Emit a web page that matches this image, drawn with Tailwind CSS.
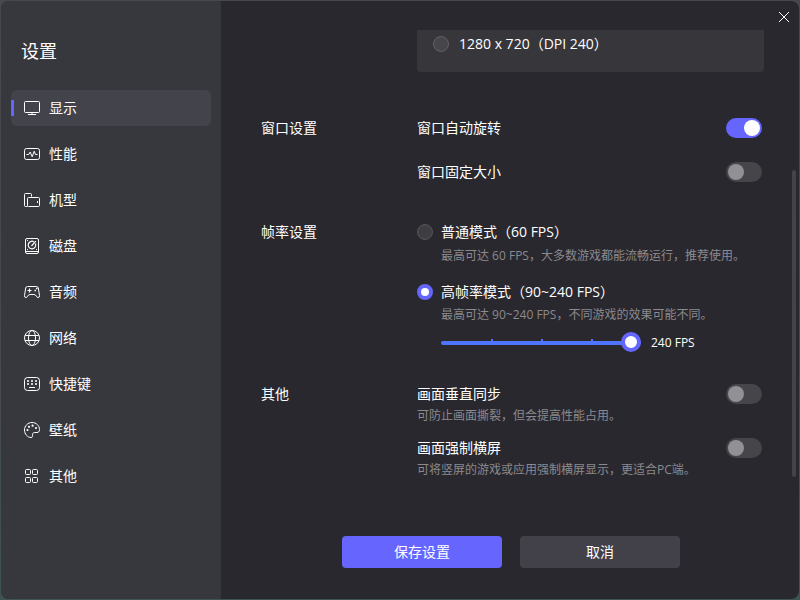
<!DOCTYPE html>
<html lang="zh-CN">
<head>
    <meta charset="UTF-8">
    <meta name="viewport" content="width=device-width, initial-scale=1.0">
    <script src="https://cdn.jsdelivr.net/npm/@tailwindcss/browser@4"></script>
    <title>设置</title>
</head>
<body class="h-screen min-h-[600px] flex p-px bg-linear-to-b from-[#47484c] via-[#4a464e] to-[#3c5452] font-['Open_Sans','Noto_Sans_CJK_SC',sans-serif] text-sm/5 text-white">
    <div class="relative flex flex-1 overflow-hidden rounded-lg bg-[#29282e]">

        <!-- Sidebar -->
        <aside class="w-[220px] shrink-0 bg-[#37383d] px-2.5 pt-9">
            <h1 class="px-2.5 text-lg/7">设置</h1>
            <nav class="mt-[25px] flex flex-col gap-2.5">
                <a href="#display" aria-current="page" class="relative flex h-9 items-center gap-[9px] rounded-md bg-[#43434b] px-[13px]">
                    <span class="absolute left-0 top-2.5 h-4 w-[3px] bg-[#6666ff]"></span>
                    <svg class="size-4" viewBox="0 0 16 16" fill="none" stroke="currentColor"><rect x=".5" y="1.5" width="15" height="11" rx="1"/><path d="M8 12.5v2M4 14.5h8"/></svg>
                    显示
                </a>
                <a href="#performance" class="flex h-9 items-center gap-[9px] px-[13px]">
                    <svg class="size-4" viewBox="0 0 16 16" fill="none" stroke="currentColor"><rect x=".5" y="2.5" width="15" height="11" rx="2"/><path d="M2.5 8.5h2.2L6.2 6l2 4.8 2-5.6 1.3 3.3h2" stroke-linejoin="round"/></svg>
                    性能
                </a>
                <a href="#model" class="flex h-9 items-center gap-[9px] px-[13px]">
                    <svg class="size-4" viewBox="0 0 16 16" fill="none" stroke="currentColor"><path d="M3.5 14.5h-2a1 1 0 0 1-1-1v-11a1 1 0 0 1 1-1h5a1 1 0 0 1 1 1v2"/><rect x="3.5" y="5.5" width="12" height="9" rx="1"/><path d="M13.5 9v2"/></svg>
                    机型
                </a>
                <a href="#disk" class="flex h-9 items-center gap-[9px] px-[13px]">
                    <svg class="size-4" viewBox="0 0 16 16" fill="none" stroke="currentColor"><rect x="1.5" y=".5" width="13" height="15" rx="1.5"/><path d="M2 13.5h12"/><path d="M9.8 3.7a3.8 3.8 0 1 0 1.7 1.9M7.5 8l4.3-4.8" stroke-width="1.2"/><path d="M3 2.5h1M3 11.5h1M12 11.5h1"/></svg>
                    磁盘
                </a>
                <a href="#audio" class="flex h-9 items-center gap-[9px] px-[13px]">
                    <svg class="size-4" viewBox="0 0 16 16" fill="none" stroke="currentColor" stroke-linejoin="round"><path d="M3.5 2.5h9q1.5 0 1.8 1.5l1.2 7.5q.2 2-1.5 2-1 0-1.5-1-.8-2-2.500-2H6q-1.700 0-2.500 2-.5 1-1.500 1-1.700 0-1.500-2L1.700 4Q2 2.500 3.500 2.500Z"/><path d="M5.500 4.500v4M3.500 6.500h4" stroke-width="1.200"/><path d="M10.500 6.500h1.500M12 4.500h1.500" stroke-width="1.600"/></svg>
                    音频
                </a>
                <a href="#network" class="flex h-9 items-center gap-[9px] px-[13px]">
                    <svg class="size-4" viewBox="0 0 16 16" fill="none" stroke="currentColor"><circle cx="8" cy="8" r="7.5"/><ellipse cx="8" cy="8" rx="3.5" ry="7.5"/><path d="M1.2 5.5h13.6M1.2 10.5h13.6"/></svg>
                    网络
                </a>
                <a href="#hotkeys" class="flex h-9 items-center gap-[9px] px-[13px]">
                    <svg class="size-4" viewBox="0 0 16 16" fill="none" stroke="currentColor"><rect x=".5" y="1.5" width="15" height="13" rx="3"/><path d="M3 5h2M7 5h2M11 5h2M3 8h2M7 8h2M11 8h2" stroke-width="1.6"/><path d="M5 11.500h6"/></svg>
                    快捷键
                </a>
                <a href="#wallpaper" class="flex h-9 items-center gap-[9px] px-[13px]">
                    <svg class="size-4" viewBox="0 0 16 16" fill="none" stroke="currentColor"><path d="M8 .5C3.8.5.5 3.8.5 8c0 4 3 7.5 6.5 7.5 2 0 1.5-1.8 1.5-2.700 0-1.500.8-2.300 2.200-2.300h2.300c1.500 0 2.500-1 2.500-2.800C15.500 3.500 12.200.5 8 .5Z"/><g fill="currentColor" stroke="none"><circle cx="3.5" cy="8" r="1.100"/><circle cx="5" cy="4.800" r="1.100"/><circle cx="8.600" cy="3.700" r="1.100"/><circle cx="12" cy="6" r="1.100"/></g></svg>
                    壁纸
                </a>
                <a href="#other" class="flex h-9 items-center gap-[9px] px-[13px]">
                    <svg class="size-4" viewBox="0 0 16 16" fill="none" stroke="currentColor"><rect x="1.5" y="1.5" width="5" height="5" rx="1"/><rect x="8.5" y="1.5" width="5" height="5" rx="1"/><rect x="1.5" y="9.5" width="5" height="5" rx="1"/><rect x="8.5" y="9.5" width="5" height="5" rx="1"/></svg>
                    其他
                </a>
            </nav>
        </aside>

        <!-- Content -->
        <main class="flex flex-1 flex-col">
            <div class="flex-1 overflow-hidden pl-10 pr-[35px] pt-[29px]">
                <div class="ml-[156px] h-[42px] rounded-b bg-[#37363b] px-4 pt-1">
                    <label class="flex items-center gap-2.5">
                        <input type="radio" name="resolution" class="size-4 appearance-none rounded-full border border-[#626165] bg-[#47464a]">
                        1280 x 720（DPI 240）
                    </label>
                </div>

                <section class="mt-[46px] flex">
                    <h2 class="w-[156px] shrink-0">窗口设置</h2>
                    <div class="flex flex-1 flex-col gap-6 pr-0.5">
                        <div class="flex justify-between">
                            <label for="autoRotate">窗口自动旋转</label>
                            <input id="autoRotate" type="checkbox" role="switch" checked class="h-5 w-9 appearance-none rounded-full bg-[#464549] p-0.5 before:block before:size-4 before:rounded-full before:bg-[#919095] checked:bg-[#6666ff] checked:before:ml-4 checked:before:bg-white">
                        </div>
                        <div class="flex justify-between">
                            <label for="fixedSize">窗口固定大小</label>
                            <input id="fixedSize" type="checkbox" role="switch" class="h-5 w-9 appearance-none rounded-full bg-[#464549] p-0.5 before:block before:size-4 before:rounded-full before:bg-[#919095] checked:bg-[#6666ff] checked:before:ml-4 checked:before:bg-white">
                        </div>
                    </div>
                </section>

                <section class="mt-10 flex">
                    <h2 class="w-[156px] shrink-0">帧率设置</h2>
                    <div class="flex flex-1 flex-col gap-4">
                        <div>
                            <label class="flex items-center gap-2">
                                <input type="radio" name="fps" class="size-4 appearance-none rounded-full border border-[#57565a] bg-[#3e3d42] checked:border-4 checked:border-[#6666ff] checked:bg-white">
                                普通模式（60 FPS）
                            </label>
                            <p class="ml-6 mt-1 text-xs/5 text-[#8b8a8e]">最高可达 60 FPS，大多数游戏都能流畅运行，推荐使用。</p>
                        </div>
                        <div>
                            <label class="flex items-center gap-2">
                                <input type="radio" name="fps" checked class="size-4 appearance-none rounded-full border border-[#57565a] bg-[#3e3d42] checked:border-4 checked:border-[#6666ff] checked:bg-white">
                                高帧率模式（90~240 FPS）
                            </label>
                            <p class="ml-6 mt-[3px] text-xs/5 text-[#8b8a8e]">最高可达 90~240 FPS，不同游戏的效果可能不同。</p>
                            <div class="ml-6 mt-2 flex items-center gap-2.5 text-xs/5">
                                <div class="relative flex">
                                    <input id="fpsRange" type="range" min="90" max="240" value="240" aria-label="FPS" class="h-5 w-[200px] appearance-none bg-transparent [&::-webkit-slider-runnable-track]:h-1 [&::-webkit-slider-runnable-track]:rounded-full [&::-webkit-slider-runnable-track]:bg-[#4f74ff] [&::-webkit-slider-thumb]:-mt-[9px] [&::-webkit-slider-thumb]:size-5 [&::-webkit-slider-thumb]:appearance-none [&::-webkit-slider-thumb]:rounded-full [&::-webkit-slider-thumb]:border-4 [&::-webkit-slider-thumb]:border-[#6666ff] [&::-webkit-slider-thumb]:bg-white">
                                    <div class="pointer-events-none absolute left-[50px] right-12 top-1.5 flex justify-between">
                                        <span class="h-1 w-0.5 bg-[#4f74ff]"></span>
                                        <span class="h-1 w-0.5 bg-[#4f74ff]"></span>
                                        <span class="h-1 w-0.5 bg-[#4f74ff]"></span>
                                    </div>
                                </div>
                                <output id="fpsValue" for="fpsRange">240 FPS</output>
                            </div>
                        </div>
                    </div>
                </section>

                <section class="mt-[31px] flex">
                    <h2 class="w-[156px] shrink-0">其他</h2>
                    <div class="flex flex-1 flex-col gap-3 pr-0.5">
                        <div class="flex items-start justify-between">
                            <div>
                                <label for="vsync">画面垂直同步</label>
                                <p class="mt-0.5 text-xs/5 text-[#8b8a8e]">可防止画面撕裂，但会提高性能占用。</p>
                            </div>
                            <input id="vsync" type="checkbox" role="switch" class="h-5 w-9 appearance-none rounded-full bg-[#464549] p-0.5 before:block before:size-4 before:rounded-full before:bg-[#919095] checked:bg-[#6666ff] checked:before:ml-4 checked:before:bg-white">
                        </div>
                        <div class="flex items-start justify-between">
                            <div>
                                <label for="landscape">画面强制横屏</label>
                                <p class="mt-0.5 text-xs/5 text-[#8b8a8e]">可将竖屏的游戏或应用强制横屏显示，更适合PC端。</p>
                            </div>
                            <input id="landscape" type="checkbox" role="switch" class="h-5 w-9 appearance-none rounded-full bg-[#464549] p-0.5 before:block before:size-4 before:rounded-full before:bg-[#919095] checked:bg-[#6666ff] checked:before:ml-4 checked:before:bg-white">
                        </div>
                    </div>
                </section>
            </div>

            <div class="flex justify-center gap-[18px] pb-[31px] pl-0.5">
                <button type="button" class="h-8 w-40 rounded-sm bg-[#6666ff]">保存设置</button>
                <button type="button" class="h-8 w-40 rounded-sm bg-[#42414a]">取消</button>
            </div>
        </main>

        <!-- Scrollbar -->
        <div class="absolute right-[3px] top-[169px] h-[307px] w-1 rounded-full bg-[#444348]"></div>

        <button type="button" aria-label="关闭" class="absolute right-[7px] top-2 flex size-4 items-center justify-center">
            <svg class="size-3" viewBox="0 0 12 12" fill="none" stroke="currentColor"><path d="m1 1 10 10M11 1 1 11"/></svg>
        </button>
    </div>

    <script>
        const fpsRange = document.getElementById('fpsRange');
        const fpsValue = document.getElementById('fpsValue');

        fpsRange.addEventListener('input', () => {
            fpsValue.innerText = `${fpsRange.value} FPS`;
        });
    </script>
</body>
</html>
